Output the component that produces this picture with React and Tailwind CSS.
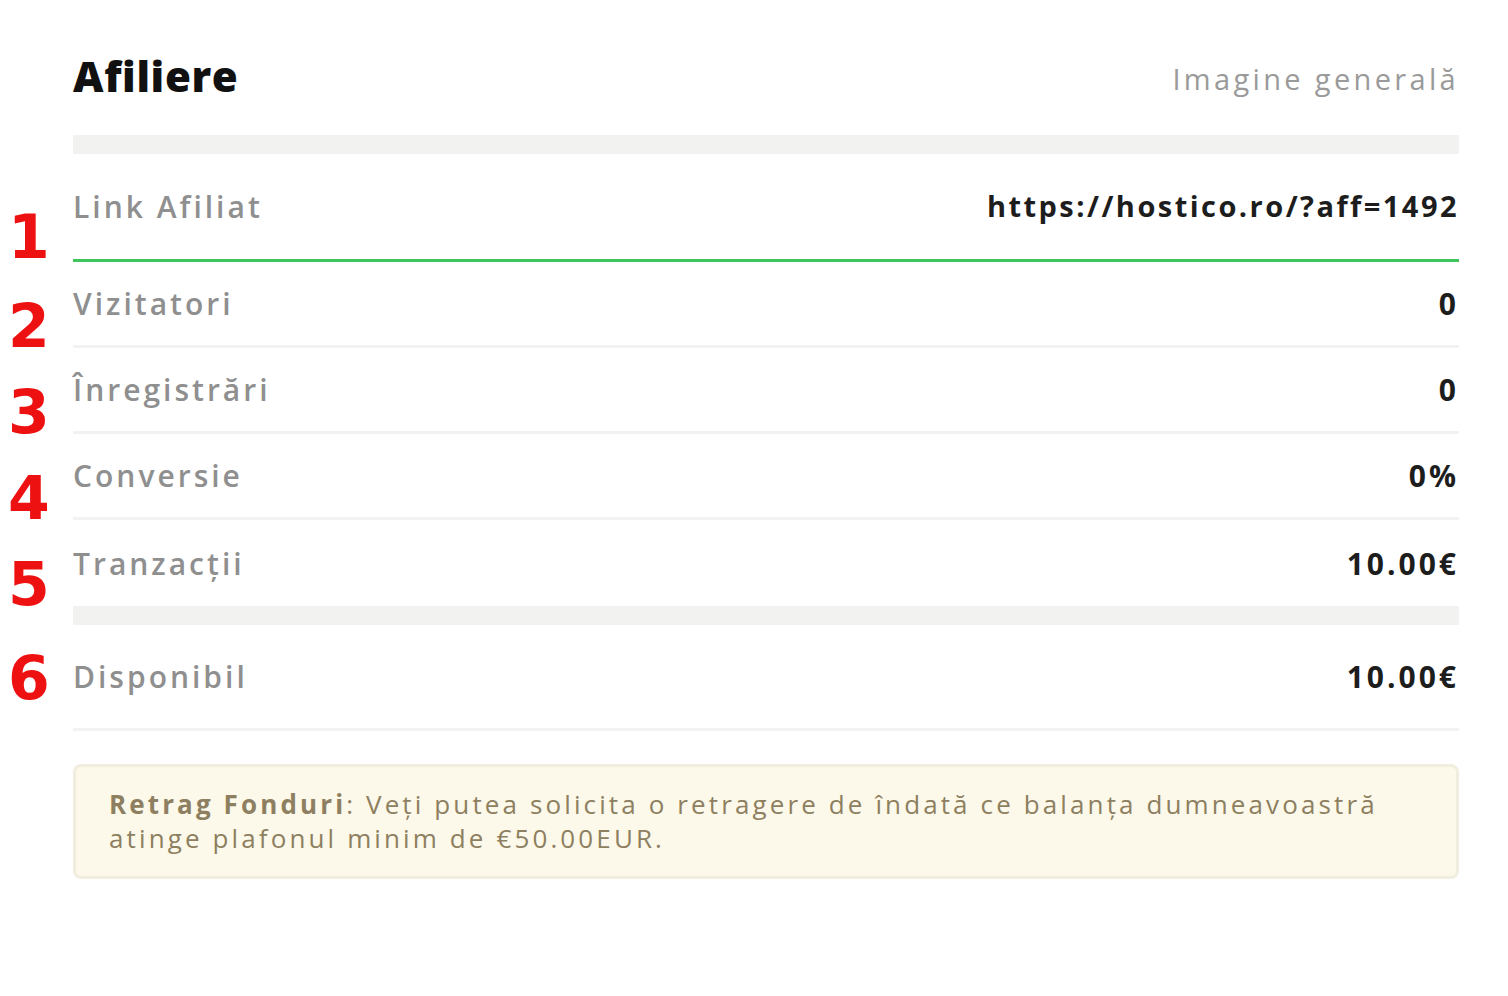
import React from "react";

const rows = [
  { n: "2", label: "Vizitatori", value: "0" },
  { n: "3", label: "Înregistrări", value: "0" },
  { n: "4", label: "Conversie", value: "0%" },
  { n: "5", label: "Tranzacții", value: "10.00€" },
];

function Mark({ n, className = "" }) {
  return (
    <span
      className={`absolute -left-[65px] text-[60px] font-bold leading-none text-[#ee1111] ${className}`}
      style={{ fontFamily: "'DejaVu Sans', Arial, sans-serif" }}
    >
      {n}
    </span>
  );
}

export default function App() {
  return (
    <div
      className="min-h-screen w-full bg-white pl-[73px] pr-[49px] pt-[50px]"
      style={{ fontFamily: "'Open Sans', 'Noto Sans', sans-serif" }}
    >
      {/* Header */}
      <div className="flex items-center justify-between">
        <h1 className="text-[42px] font-extrabold leading-[52px] tracking-[0.015em] text-[#111]">
          Afiliere
        </h1>
        <span className="mt-[6px] text-[29px] tracking-[0.115em] text-[#9a9a9a]">
          Imagine generală
        </span>
      </div>

      <div className="mt-[33px] h-[19px] bg-[#f2f2f1]" />

      {/* Link row */}
      <div className="relative flex h-[108px] items-center justify-between border-b-[3px] border-[#3fc45e] pb-[1px]">
        <Mark n="1" className="top-[53px]" />
        <span className="text-[30px] font-semibold tracking-[0.1em] text-[#8f8f8f]">
          Link Afiliat
        </span>
        <span className="text-[29px] font-bold tracking-[0.085em] text-[#1d1d1d]">
          https://hostico.ro/?aff=1492
        </span>
      </div>

      {rows.map((r, i) => (
        <div
          key={r.n}
          className={`relative flex h-[86px] items-center justify-between ${
            i < rows.length - 1 ? "border-b-[3px] border-[#f2f2f2]" : ""
          }`}
        >
          <Mark n={r.n} className="top-[34px]" />
          <span className="text-[30px] font-semibold tracking-[0.1em] text-[#8f8f8f]">
            {r.label}
          </span>
          <span className="text-[30px] font-bold tracking-[0.1em] text-[#1d1d1d]">
            {r.value}
          </span>
        </div>
      ))}

      <div className="h-[19px] bg-[#f2f2f1]" />

      <div className="relative flex h-[106px] items-center justify-between border-b-[3px] border-[#f2f2f2]">
        <Mark n="6" className="top-[23px]" />
        <span className="text-[30px] font-semibold tracking-[0.1em] text-[#8f8f8f]">
          Disponibil
        </span>
        <span className="text-[30px] font-bold tracking-[0.1em] text-[#1d1d1d]">
          10.00€
        </span>
      </div>

      {/* Alert */}
      <div className="mt-[33px] rounded-[8px] border-[3px] border-[#f1eedf] bg-[#fcf9ea] pb-[21px] pl-[33px] pr-[40px] pt-[20px] text-[26px] leading-[34px] tracking-[0.12em] text-[#8d7f60]">
        <span className="font-bold">Retrag Fonduri</span>: Veți putea solicita o
        retragere de îndată ce balanța dumneavoastră atinge plafonul minim de
        €50.00EUR.
      </div>
    </div>
  );
}
